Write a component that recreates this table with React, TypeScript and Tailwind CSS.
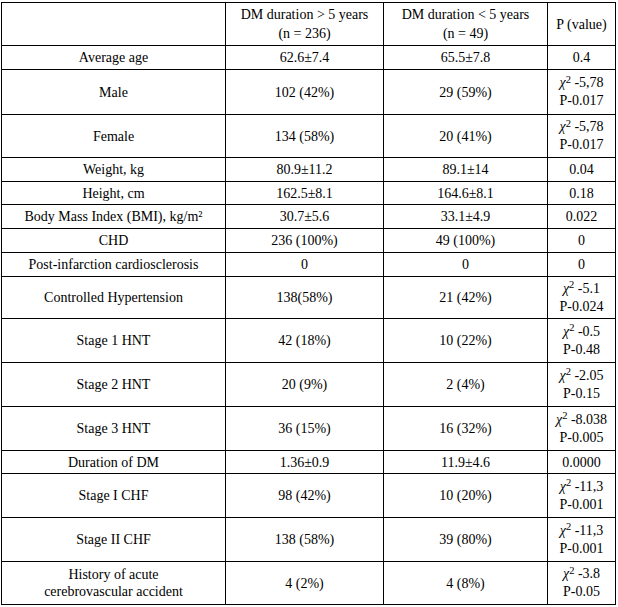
import React from "react";

type Row = { label: React.ReactNode; a: React.ReactNode; b: React.ReactNode; p: React.ReactNode; h: string };

const Chi = ({ v, p }: { v: string; p: string }) => (
  <span className="block leading-[18px]">
    <i>χ</i>
    <sup className="-top-[0.4em]">2</sup> {v}
    <br />
    {p}
  </span>
);

const rows: Row[] = [
  { label: "Average age", a: "62.6±7.4", b: "65.5±7.8", p: "0.4", h: "h-[24px]" },
  { label: "Male", a: "102 (42%)", b: "29 (59%)", p: <Chi v="-5,78" p="P-0.017" />, h: "h-[45px]" },
  { label: "Female", a: "134 (58%)", b: "20 (41%)", p: <Chi v="-5,78" p="P-0.017" />, h: "h-[43px]" },
  { label: "Weight, kg", a: "80.9±11.2", b: "89.1±14", p: "0.04", h: "h-[24px]" },
  { label: "Height, cm", a: "162.5±8.1", b: "164.6±8.1", p: "0.18", h: "h-[23px]" },
  { label: "Body Mass Index (BMI), kg/m²", a: "30.7±5.6", b: "33.1±4.9", p: "0.022", h: "h-[24px]" },
  { label: "CHD", a: "236 (100%)", b: "49 (100%)", p: "0", h: "h-[24px]" },
  { label: "Post-infarction cardiosclerosis", a: "0", b: "0", p: "0", h: "h-[24px]" },
  { label: "Controlled Hypertension", a: "138(58%)", b: "21 (42%)", p: <Chi v="-5.1" p="P-0.024" />, h: "h-[42px]" },
  { label: "Stage 1 HNT", a: "42 (18%)", b: "10 (22%)", p: <Chi v="-0.5" p="P-0.48" />, h: "h-[44px]" },
  { label: "Stage 2 HNT", a: "20 (9%)", b: "2 (4%)", p: <Chi v="-2.05" p="P-0.15" />, h: "h-[44px]" },
  { label: "Stage 3 HNT", a: "36 (15%)", b: "16 (32%)", p: <Chi v="-8.038" p="P-0.005" />, h: "h-[44px]" },
  { label: "Duration of DM", a: "1.36±0.9", b: "11.9±4.6", p: "0.0000", h: "h-[23px]" },
  { label: "Stage I CHF", a: "98 (42%)", b: "10 (20%)", p: <Chi v="-11,3" p="P-0.001" />, h: "h-[44px]" },
  { label: "Stage II CHF", a: "138 (58%)", b: "39 (80%)", p: <Chi v="-11,3" p="P-0.001" />, h: "h-[44px]" },
  {
    label: (
      <span className="block leading-[17px]">
        History of acute
        <br />
        cerebrovascular accident
      </span>
    ),
    a: "4 (2%)",
    b: "4 (8%)",
    p: <Chi v="-3.8" p="P-0.05" />,
    h: "h-[43px]",
  },
];

const cell = "flex items-center justify-center text-center border-r border-b border-black";

export default function App() {
  return (
    <div className="min-h-screen bg-white pt-[2px] pl-px font-['Liberation_Serif',serif] text-[14px] text-black">
      <div className="grid w-[615px] grid-cols-[224px_158px_164px_68px] border-l border-t border-black">
        <div className={`${cell} h-[43px]`} />
        <div className={`${cell} h-[43px]`}>
          <span className="block leading-[19px]">
            DM duration &gt; 5 years
            <br />
            (n = 236)
          </span>
        </div>
        <div className={`${cell} h-[43px]`}>
          <span className="block leading-[19px]">
            DM duration &lt; 5 years
            <br />
            (n = 49)
          </span>
        </div>
        <div className={`${cell} h-[43px]`}>P (value)</div>

        {rows.map((r, i) => (
          <React.Fragment key={i}>
            <div className={`${cell} ${r.h}`}>{r.label}</div>
            <div className={`${cell} ${r.h}`}>{r.a}</div>
            <div className={`${cell} ${r.h}`}>{r.b}</div>
            <div className={`${cell} ${r.h}`}>{r.p}</div>
          </React.Fragment>
        ))}
      </div>
    </div>
  );
}
